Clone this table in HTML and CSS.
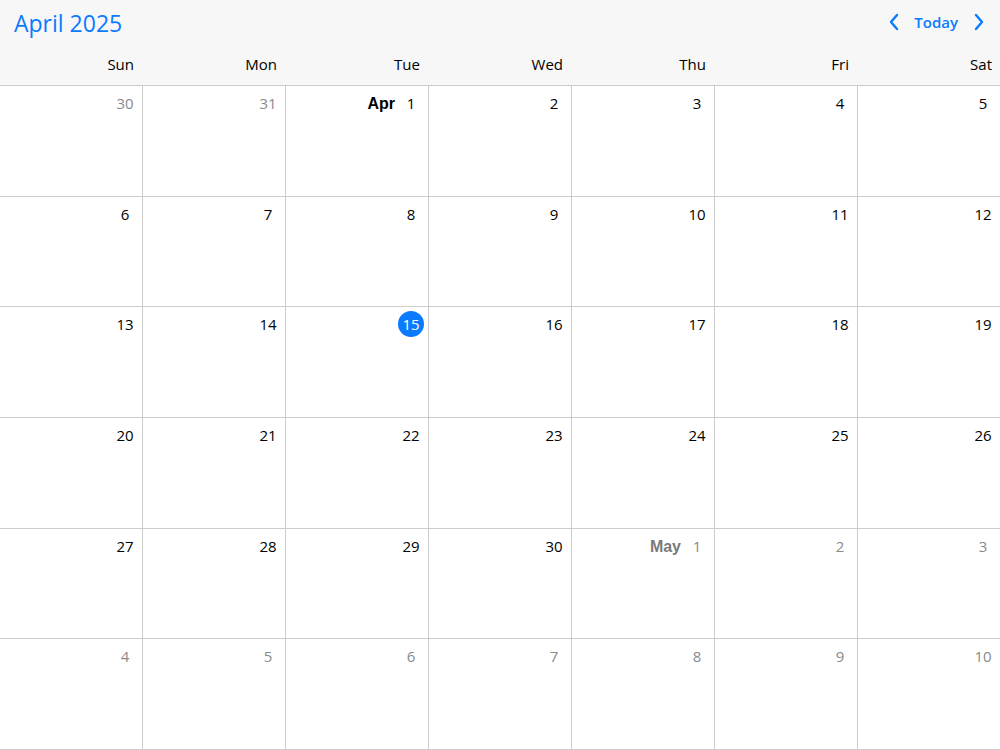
FILE: index.html
```html
<!DOCTYPE html>
<html lang="en">
<head>
<meta charset="utf-8">
<title>April 2025</title>
<link rel="stylesheet" href="styles.css">
</head>
<body>
<div class="calendar">
  <header class="head">
    <div class="toolbar">
      <h1 class="title">April 2025</h1>
      <nav class="nav">
        <button class="arrow" aria-label="Previous"><svg width="12" height="18" viewBox="0 0 12 18"><path d="M9 2 L3 9 L9 16" fill="none" stroke="currentColor" stroke-width="2.4" stroke-linecap="round" stroke-linejoin="round"/></svg></button>
        <button class="today">Today</button>
        <button class="arrow" aria-label="Next"><svg width="12" height="18" viewBox="0 0 12 18"><path d="M3 2 L9 9 L3 16" fill="none" stroke="currentColor" stroke-width="2.4" stroke-linecap="round" stroke-linejoin="round"/></svg></button>
      </nav>
    </div>
    <div class="weekdays">
      <div>Sun</div><div>Mon</div><div>Tue</div><div>Wed</div><div>Thu</div><div>Fri</div><div>Sat</div>
    </div>
  </header>
  <div class="grid">
    <div class="cell other"><span class="num">30</span></div>
    <div class="cell other"><span class="num">31</span></div>
    <div class="cell"><span class="mon">Apr</span><span class="num">1</span></div>
    <div class="cell"><span class="num">2</span></div>
    <div class="cell"><span class="num">3</span></div>
    <div class="cell"><span class="num">4</span></div>
    <div class="cell"><span class="num">5</span></div>

    <div class="cell"><span class="num">6</span></div>
    <div class="cell"><span class="num">7</span></div>
    <div class="cell"><span class="num">8</span></div>
    <div class="cell"><span class="num">9</span></div>
    <div class="cell"><span class="num">10</span></div>
    <div class="cell"><span class="num">11</span></div>
    <div class="cell"><span class="num">12</span></div>

    <div class="cell"><span class="num">13</span></div>
    <div class="cell"><span class="num">14</span></div>
    <div class="cell"><span class="num current">15</span></div>
    <div class="cell"><span class="num">16</span></div>
    <div class="cell"><span class="num">17</span></div>
    <div class="cell"><span class="num">18</span></div>
    <div class="cell"><span class="num">19</span></div>

    <div class="cell"><span class="num">20</span></div>
    <div class="cell"><span class="num">21</span></div>
    <div class="cell"><span class="num">22</span></div>
    <div class="cell"><span class="num">23</span></div>
    <div class="cell"><span class="num">24</span></div>
    <div class="cell"><span class="num">25</span></div>
    <div class="cell"><span class="num">26</span></div>

    <div class="cell"><span class="num">27</span></div>
    <div class="cell"><span class="num">28</span></div>
    <div class="cell"><span class="num">29</span></div>
    <div class="cell"><span class="num">30</span></div>
    <div class="cell other"><span class="mon">May</span><span class="num">1</span></div>
    <div class="cell other"><span class="num">2</span></div>
    <div class="cell other"><span class="num">3</span></div>

    <div class="cell other"><span class="num">4</span></div>
    <div class="cell other"><span class="num">5</span></div>
    <div class="cell other"><span class="num">6</span></div>
    <div class="cell other"><span class="num">7</span></div>
    <div class="cell other"><span class="num">8</span></div>
    <div class="cell other"><span class="num">9</span></div>
    <div class="cell other"><span class="num">10</span></div>
  </div>
</div>
</body>
</html>
```
FILE: styles.css
```css
* { box-sizing: border-box; }
html, body { margin: 0; padding: 0; background: #fff; }
body {
  font-family: "Open Sans", "Noto Sans", "DejaVu Sans", sans-serif;
  color: #000;
  width: 1000px;
  height: 750px;
  overflow: hidden;
}
.calendar { display: flex; flex-direction: column; height: 750px; }
.head {
  background: #f7f7f7;
  border-bottom: 1px solid #cccccc;
  height: 86px;
  display: flex;
  flex-direction: column;
}
.toolbar {
  display: flex;
  align-items: center;
  justify-content: space-between;
  height: 45px;
  padding: 0 15px 0 14px;
}
.title {
  margin: 0;
  font-weight: 400;
  font-size: 23px;
  color: #0a7bff;
  letter-spacing: 0;
}
.nav { display: flex; align-items: center; gap: 0; margin-top: -1px; }
.nav button {
  background: none;
  border: 0;
  padding: 0;
  color: #0a7bff;
  font-family: inherit;
  cursor: pointer;
  display: flex;
  align-items: center;
}
.arrow { width: 12px; height: 20px; }
.today {
  font-size: 15px;
  font-weight: 600;
  margin: 0 15px 0 14px;
}
.weekdays {
  display: grid;
  grid-template-columns: repeat(6, 143px) 1fr;
  font-size: 15px;
  height: 40px;
  align-items: center;
}
.weekdays div {
  text-align: right;
  padding-right: 8px;
  padding-bottom: 3px;
}
.weekdays div:nth-child(-n+6) { padding-right: 9px; }
.grid {
  flex: 1;
  display: grid;
  grid-template-columns: repeat(6, 143px) 1fr;
  grid-template-rows: repeat(6, 1fr);
}
.cell {
  border-right: 1px solid #cccccc;
  border-bottom: 1px solid #cccccc;
  display: flex;
  justify-content: flex-end;
  align-items: baseline;
  padding: 4px 4px 0 0;
}
.cell:nth-child(7n) { border-right: 0; }
.num {
  min-width: 26px;
  height: 26px;
  line-height: 26px;
  text-align: center;
  font-size: 15px;
  border-radius: 13px;
}
.mon {
  font-family: "Liberation Sans", Arial, sans-serif;
  font-weight: 700;
  font-size: 16px;
  line-height: 26px;
  margin-right: 3px;
}
.other { color: #8a8a8a; }
.other .mon { color: #7a7a7a; }
.current {
  background: #0a7bff;
  color: #fff;
}
```
